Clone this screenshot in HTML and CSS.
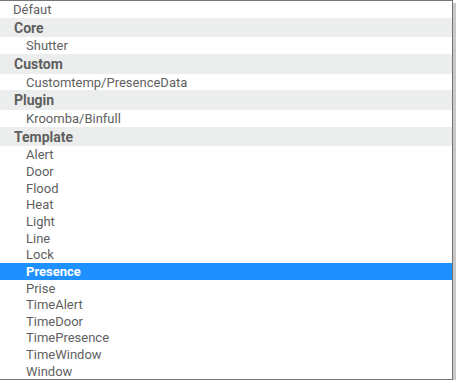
FILE: index.html
```html
<!DOCTYPE html>
<html lang="fr">
<head>
    <meta charset="UTF-8">
    <title>Widgets</title>
    <link rel="stylesheet" href="styles.css">
</head>
<body>
    <div class="liste">
        <div class="option racine">Défaut</div>

        <div class="groupe">Core</div>
        <div class="option">Shutter</div>

        <div class="groupe">Custom</div>
        <div class="option">Customtemp/PresenceData</div>

        <div class="groupe">Plugin</div>
        <div class="option">Kroomba/Binfull</div>

        <div class="groupe">Template</div>
        <div class="option">Alert</div>
        <div class="option">Door</div>
        <div class="option">Flood</div>
        <div class="option">Heat</div>
        <div class="option">Light</div>
        <div class="option">Line</div>
        <div class="option">Lock</div>
        <div class="option actif">Presence</div>
        <div class="option">Prise</div>
        <div class="option">TimeAlert</div>
        <div class="option">TimeDoor</div>
        <div class="option">TimePresence</div>
        <div class="option">TimeWindow</div>
        <div class="option">Window</div>
    </div>
</body>
</html>
```

FILE: styles.css
```css
body {
    margin: 0;
    font-family: Roboto, "Noto Sans", sans-serif;
    background: #fff;
}
.liste {
    width: 452px;
    border-top: 1px solid #777;
    border-right: 1px solid #777;
    border-bottom: 1px solid #777;
    box-shadow: 3px 3px 0 #c8c8c8;
    background: #fff;
    color: #5f5f5f;
}
.option {
    font-size: 13px;
    height: 16.67px;
    line-height: 17.5px;
    padding-left: 26px;
    white-space: nowrap;
    overflow: hidden;
}
.option.racine {
    padding-left: 13px;
}
.groupe {
    font-size: 14px;
    font-weight: bold;
    height: 19.67px;
    line-height: 20.5px;
    padding-left: 14px;
    background: #eceeed;
    overflow: hidden;
}
.actif {
    background: #1e90ff;
    color: #fff;
    font-weight: bold;
}
```
